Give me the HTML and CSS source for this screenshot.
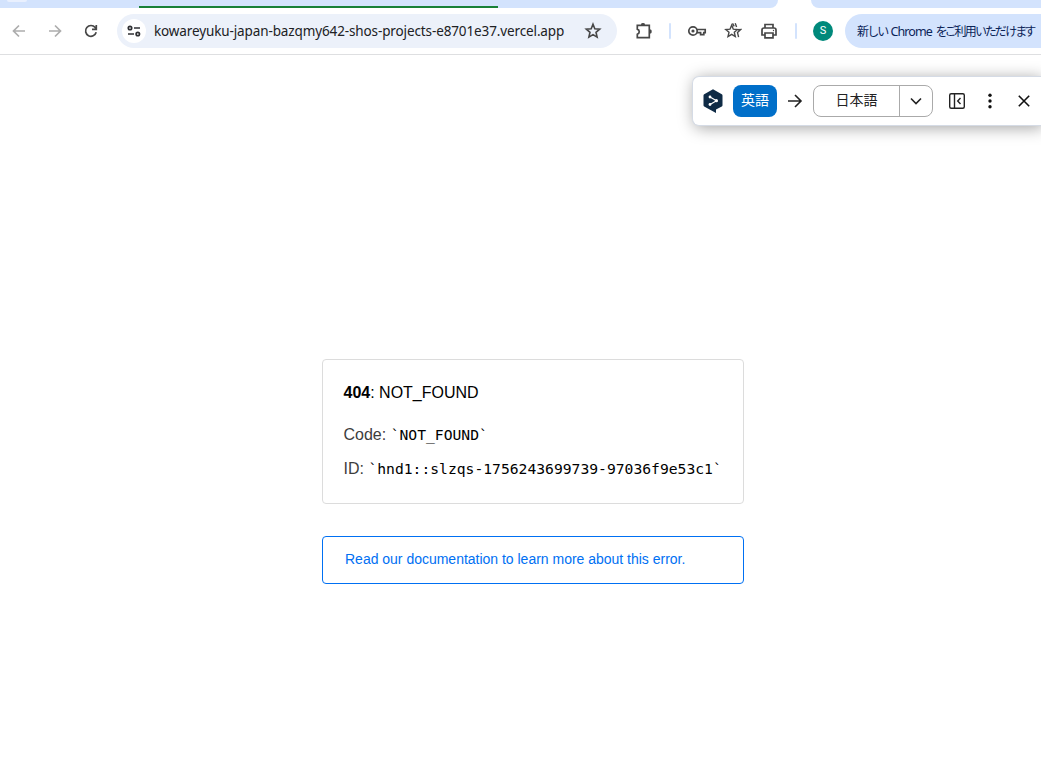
FILE: index.html
```html
<!DOCTYPE html>
<html lang="ja">
<head>
<meta charset="utf-8">
<title>404: NOT_FOUND</title>
<link rel="stylesheet" href="styles.css">
</head>
<body>
<div class="tabstrip">
  <div class="tabs-left"><span class="tab-search"></span><span class="tab-group-line"></span></div>
  <div class="tabs-right"></div>
</div>
<header class="toolbar">
  <div class="nav">
    <svg class="muted" width="16" height="16" viewBox="0 0 16 16"><path d="M14 8H3M8 2.5 2.5 8 8 13.5"/></svg>
    <svg class="muted" width="16" height="16" viewBox="0 0 16 16"><path d="M2 8h11M8 2.5 13.5 8 8 13.5"/></svg>
    <svg width="16" height="16" viewBox="0 0 16 16"><path d="M13.2 9.3A5.4 5.4 0 1 1 12.2 4.5L13.3 6M13.3 2v4.3H9"/></svg>
  </div>
  <div class="omnibox">
    <span class="site-info"><svg width="14" height="12" viewBox="0 0 14 12"><circle cx="3" cy="3" r="1.7"/><path d="M7 3h6M1 9h6"/><circle cx="10.8" cy="9" r="1.7"/></svg></span>
    <span class="url">kowareyuku-japan-bazqmy642-shos-projects-e8701e37.vercel.app</span>
    <svg class="bookmark" width="18" height="18" viewBox="0 0 18 18"><path d="m9 2.2 1.8 4.5 4.9.4-3.7 3.2 1.1 4.8L9 12.6l-4.1 2.5L6 10.3 2.3 7.1l4.9-.4z"/></svg>
  </div>
  <div class="actions">
    <svg class="puzzle" width="20" height="20" viewBox="0 0 20 20"><path d="M4.3 4.3h12v12.4h-12v-3.4c2.6-1.2 2.6-4.2 0-5.2z"/><path class="solid" d="M8.1 4V3q0-1 1.9-1t1.9 1v1zM16.7 8.6h1q1 0 1 1.9t-1 1.9h-1z"/></svg>
    <span class="divider"></span>
    <svg class="key" width="20" height="16" viewBox="0 0 20 16"><circle cx="6" cy="8" r="4.2"/><circle class="solid" cx="6" cy="8" r="1.6"/><path d="M10 6.5h8.2v3.2h-1.4v2h-3.2v-2H10"/></svg>
    <svg class="stars" width="18" height="18" viewBox="0 0 18 18"><path d="m7.7 3.2 1.6 4 4.2.3-3.2 2.8 1 4.3-3.6-2.3-3.7 2.3 1-4.3-3.2-2.8L6 7.2zM8.5 1.3l1.7 3M11.2 1.3l1.4 3.7M14 7.7l2.8-.2-3.3 3.1 1.1 4.5"/></svg>
    <svg class="printer" width="18" height="18" viewBox="0 0 18 18"><path d="M5 6V2.5h8V6M5 13H2V8q0-2 2-2h10q2 0 2 2v5h-3M5 11h8v4.8H5z"/><circle class="solid" cx="13.5" cy="8.5" r=".7"/></svg>
    <span class="divider second"></span>
    <span class="avatar">S</span>
  </div>
  <div class="update"><span class="ja">新しい</span><span class="latin">Chrome</span><span class="ja">をご利用いただけます</span></div>
</header>
<main class="page">
  <section class="error">
    <h1><strong>404</strong>: NOT_FOUND</h1>
    <p>Code: <code class="code">`NOT_FOUND`</code></p>
    <p>ID: <code>`hnd1::slzqs-1756243699739-97036f9e53c1`</code></p>
  </section>
  <a class="docs">Read our documentation to learn more about this error.</a>
</main>
<aside class="translator">
  <svg class="deepl" width="20" height="24" viewBox="0 0 20 24"><path class="hex" d="m10 .3 8.8 4.9q.7.4.7 1.2v9.8q0 .8-.7 1.2L13 20.5V24l-5-2.8L1.2 17.4q-.7-.4-.7-1.2V6.4q0-.8.7-1.2z"/><path class="link" d="m7 8 6.5 3.8L7 15.5"/><circle cx="7" cy="8" r="1.4"/><circle cx="13.4" cy="11.7" r="1.6"/><circle cx="7" cy="15.5" r="1.4"/></svg>
  <span class="source">英語</span>
  <svg class="to" width="16" height="16" viewBox="0 0 16 16"><path d="M1 8h13M8 2l6 6-6 6"/></svg>
  <div class="target"><span>日本語</span><i><svg width="14" height="14" viewBox="0 0 14 14"><path d="m2 4.5 5 5 5-5"/></svg></i></div>
  <svg class="panel" width="18" height="18" viewBox="0 0 18 18"><rect x="1.7" y="1.7" width="14.6" height="14.6" rx="1.5"/><path d="M6.5 2v14M12.5 6 9.7 9l2.8 3"/></svg>
  <svg class="more" width="6" height="18" viewBox="0 0 6 18"><circle cx="3" cy="3.3" r="1.7"/><circle cx="3" cy="9" r="1.7"/><circle cx="3" cy="14.7" r="1.7"/></svg>
  <svg class="close" width="14" height="14" viewBox="0 0 14 14"><path d="m1.8 1.8 10.4 10.4M12.2 1.8 1.8 12.2"/></svg>
</aside>
</body>
</html>
```

FILE: styles.css
```css
* { box-sizing: border-box; }
body {
  margin: 0;
  height: 759px;
  overflow: hidden;
  background: #fff;
  display: flex;
  flex-direction: column;
  font-family: "Liberation Sans", Arial, sans-serif;
}
svg { flex: none; fill: none; stroke: #474747; stroke-width: 1.7; }
.solid { fill: #474747; stroke: none; }

.tabstrip { display: flex; justify-content: space-between; height: 8px; flex: none; }
.tabs-left { width: 778px; background: #d3e3fd; border-bottom-right-radius: 9px; display: flex; }
.tab-search { width: 20px; height: 2px; margin-left: 7px; background: #e9f0fe; border-radius: 0 0 8px 8px; }
.tab-group-line { width: 359px; height: 2px; margin: 6px 0 0 112px; background: #188038; }
.tabs-right { width: 230px; background: #d3e3fd; border-bottom-left-radius: 10px; }

.toolbar { display: flex; align-items: center; height: 47px; flex: none; border-bottom: 1px solid #dedfe1; }
.nav { flex: none; display: flex; gap: 20px; width: 117px; padding-left: 11px; }
.nav .muted { stroke: #adadad; }
.omnibox { flex: none; display: flex; align-items: center; width: 500px; height: 34px; padding-left: 5px; border-radius: 17px; background: #ecf1fa; }
.site-info { display: flex; align-items: center; justify-content: center; width: 24px; height: 24px; border-radius: 50%; background: #fff; }
.site-info svg { stroke: #303134; }
.url { width: 420px; margin-left: 8px; font: 13.5px "Noto Sans", sans-serif; letter-spacing: -.12px; color: #202124; white-space: nowrap; }
.bookmark { margin-left: 10px; stroke-width: 1.6; }
.actions { flex: none; display: flex; align-items: center; width: 228px; padding-left: 16px; }
.divider { width: 2px; height: 16px; margin-left: 16px; border-radius: 1px; background: #d3e3fd; }
.key { margin-left: 16px; }
.stars { margin-left: 17px; stroke-width: 1.4; }
.printer { margin-left: 18px; }
.divider.second { margin-left: 17px; }
.avatar { flex: none; width: 20px; height: 20px; margin-left: 16px; border-radius: 50%; background: #00897b; color: #fff; font: 11px/20px Roboto, sans-serif; text-align: center; }
.update { flex: 1; min-width: 0; display: flex; height: 34px; padding-left: 12px; border-radius: 17px 0 0 17px; background: #d3e3fd; color: #0b2458; font: 12.5px/35px "Noto Sans", "Noto Sans CJK JP", sans-serif; white-space: nowrap; }
.ja { font: 12px/34px "Noto Sans CJK JP", sans-serif; font-feature-settings: "palt"; letter-spacing: -1.6px; }
.ja:first-child { width: 33.5px; letter-spacing: -.9px; }
.latin { width: 45.5px; letter-spacing: -.9px; }

.page { flex: 1; display: flex; flex-direction: column; width: 422px; margin-left: 322px; padding-top: 304px; }
.error { height: 145px; padding: 20px 20px 20px 20.5px; border: 1px solid #dcdcdc; border-radius: 4px; }
.error h1 { margin: 0 0 12px; font-size: 16px; line-height: 26px; font-weight: 400; color: #000; }
.error p { margin: 0; height: 34px; font-size: 16px; line-height: 34px; color: #3d3d3d; white-space: nowrap; }
.error code { font: 14.68px/20px "DejaVu Sans Mono", monospace; color: #000; }
.docs { height: 48px; margin-top: 32px; padding-left: 22px; border: 1px solid #0070f3; border-radius: 4px; color: #0070f3; font-size: 14px; line-height: 45px; letter-spacing: -.01px; }

.translator { position: absolute; left: 692px; top: 76px; width: 349px; height: 50px; display: flex; align-items: center; padding-left: 10px; border: 1px solid #d5dbe5; border-right: 0; border-radius: 7px 0 0 7px; background: #fff; box-shadow: 2px 2px 16px rgba(0, 0, 0, .36); font: 14px "Noto Sans CJK JP", sans-serif; }
.translator svg { stroke: #222; stroke-width: 1.6; }
.translator .deepl .hex { fill: #0f2b46; stroke: none; }
.translator .deepl { stroke: #fff; stroke-width: 1.2; margin-left: -.5px; margin-right: .5px; }
.deepl circle { fill: #fff; stroke: none; }
.source { width: 44px; height: 32px; margin-left: 10px; border-radius: 8px; background: #006fc9; color: #fff; line-height: 29px; text-align: center; }
.translator .to { margin-left: 10px; }
.target { display: flex; width: 120px; height: 32px; margin-left: 10px; border: 1px solid #aaa; border-radius: 8px; color: #222; line-height: 27px; text-align: center; }
.target span { width: 86px; border-right: 1px solid #aaa; }
.target i { flex: 1; display: flex; align-items: center; justify-content: center; }
.panel { margin-left: 15px; }
.translator .panel { stroke-width: 1.4; }
.translator .more { margin-left: 21px; fill: #111; stroke: none; }
.translator .close { margin-left: 24px; stroke: #111; }
```
